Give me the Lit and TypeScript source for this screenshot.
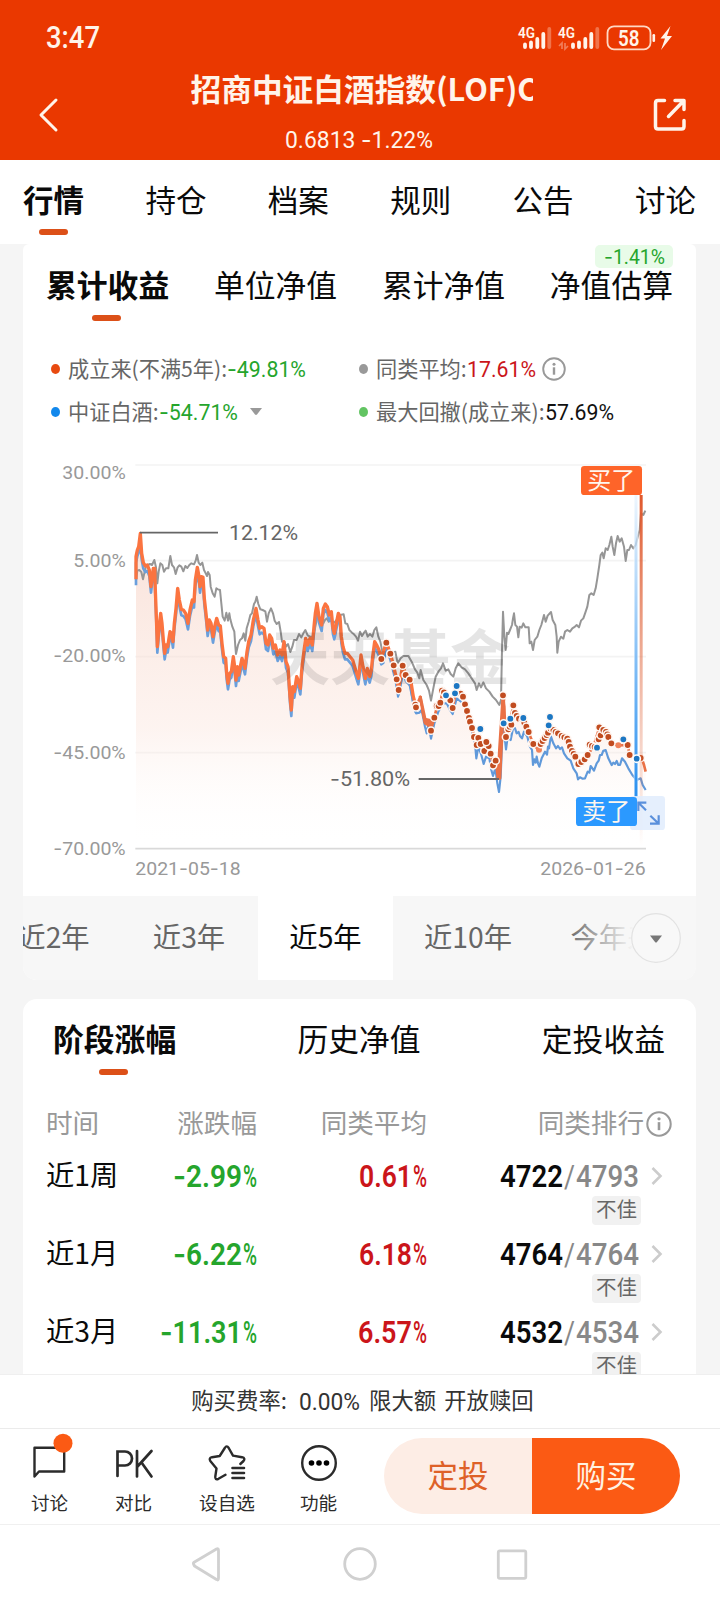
import { LitElement, html, svg, css } from "lit";
import { customElement } from "lit/decorators.js";

// Splits a figure so the sign is set in a face with a long hyphen.
const glyphs = (s: string) =>
  s.split(/(-)/).filter((p) => p).map((p) => (p === "-" ? svg`<tspan class="dash">-</tspan>` : svg`<tspan>${p}</tspan>`));

// A figure set to an exact width and cap height.
const num = (s: string, w: number, cap: number, cls = "") => html`<svg class="num ${cls}" width=${w} height=${cap} viewBox="0 0 ${w} ${cap}">
  <text x="0" y=${cap} font-size=${cap / 0.711} textLength=${w} lengthAdjust="spacingAndGlyphs">${glyphs(s)}</text>
</svg>`;

const numStyles = css`
  .num { display: block; overflow: visible; flex: none; fill: currentColor; font-family: Roboto, "Noto Sans", sans-serif; }
  .dash { font-family: Inter, sans-serif; }
  .bold { font-weight: 600; }
  .medium { font-weight: 500; }
`;

const infoIcon = (size: number) => html`<svg width=${size} height=${size} viewBox="0 0 24 24" fill="none" stroke="#999" stroke-width="1.9">
  <circle cx="12" cy="12" r="10.8" /><path d="M12 10.3v7.4" stroke-width="2.4" /><circle cx="12" cy="7.2" r="1.5" fill="#999" stroke="none" />
</svg>`;

// Series are kept in chart units: three units per pixel.
const AVERAGE = "48,390 52,362 58,360 64,366 69,388 73,370 78,348 84,345 90,342 96,345 103,330 108,352 112,400 116,365 121,340 127,345 132,365 138,355 145,355 151,318 156,345 162,352 167,372 173,352 178,346 184,350 190,364 196,348 202,354 208,345 214,340 222,343 227,332 231,315 236,338 241,345 247,338 252,360 256,368 261,378 264,366 269,375 272,410 278,430 284,440 289,415 294,418 300,420 304,460 308,500 314,512 319,488 324,512 328,490 331,508 337,530 343,545 346,590 348,612 354,585 360,570 366,565 371,550 376,572 380,535 386,515 391,495 396,490 402,462 406,455 410,440 415,462 421,478 428,480 436,484 441,515 446,490 453,475 459,490 464,512 470,522 477,516 482,545 486,575 493,575 498,590 504,582 511,606 517,590 522,570 530,570 537,552 544,562 550,550 556,540 563,556 570,560 580,560 592,500 602,510 610,520 615,510 620,505 626,515 632,508 640,520 650,510 660,495 671,493 676,520 682,522 688,540 696,548 702,553 708,560 714,572 720,545 726,558 732,548 737,542 743,560 750,552 757,560 763,540 769,532 775,560 781,575 788,610 795,600 802,588 812,610 826,605 833,640 842,625 850,618 865,618 875,635 885,658 892,668 898,685 902,660 910,690 920,705 927,722 933,752 940,715 947,680 955,665 963,655 969,640 977,662 985,658 992,672 1000,680 1007,655 1015,640 1025,652 1035,658 1045,670 1055,685 1065,700 1070,720 1077,700 1083,712 1090,697 1098,715 1108,725 1118,740 1128,750 1138,765 1143,750 1146,600 1149,485 1153,560 1157,600 1161,548 1165,552 1170,540 1176,525 1179,505 1182,490 1186,525 1191,530 1195,562 1199,530 1205,533 1210,520 1216,532 1226,532 1229,580 1234,575 1239,600 1244,570 1252,560 1258,540 1264,525 1272,495 1277,515 1283,497 1293,486 1298,510 1306,525 1310,560 1312,608 1316,575 1323,560 1330,566 1335,545 1342,540 1350,545 1357,535 1365,530 1370,525 1377,532 1383,512 1390,505 1396,488 1402,470 1408,435 1414,430 1421,435 1427,415 1432,385 1438,345 1442,315 1447,308 1451,325 1457,295 1463,300 1468,285 1474,260 1478,290 1483,315 1488,280 1493,258 1499,275 1505,265 1512,290 1517,333 1522,300 1527,300 1533,285 1540,295 1547,285 1553,262 1559,240 1563,190 1570,195 1576,182";
const FUND = "48,388 48,320 52,300 56,290 61,250 65,310 70,338 76,348 82,345 88,360 93,410 96,385 100,355 104,355 106,420 109,500 112,590 116,545 122,490 126,520 130,570 134,610 138,585 143,590 150,545 155,550 159,575 163,520 168,475 173,415 178,450 184,478 190,480 197,490 204,520 210,480 217,450 222,455 226,390 232,352 237,380 240,410 245,380 249,382 253,445 258,490 263,540 268,510 273,520 279,560 284,530 290,505 296,525 301,528 306,580 311,620 317,625 320,670 324,700 329,670 334,665 340,620 344,650 348,690 352,650 356,675 361,650 366,625 371,640 375,655 381,605 386,575 393,555 400,510 408,475 414,510 419,535 425,530 432,535 438,580 444,585 449,555 455,565 460,595 466,585 473,615 480,600 486,615 492,575 498,635 504,650 510,740 514,780 518,710 523,725 530,680 536,695 541,715 546,650 551,610 557,565 563,585 570,565 577,585 582,530 586,490 591,460 597,500 605,525 610,475 616,462 622,470 628,495 634,485 639,535 643,550 649,520 655,490 660,500 664,560 669,590 675,610 682,610 690,620 698,630 704,650 710,670 715,685 719,655 723,615 729,650 736,685 742,655 749,680 754,660 758,620 764,575 770,585 777,600 784,625 799,578 811,610 820,645 830,688 836,715 848,647 858,675 872,690 880,740 888,770";
const FUND_LATE = "888,770 901,740 908,785 916,820 924,815 933,840 943,803 952,765 961,758 968,722 980,738 992,750 998,773 1010,712 1020,728 1029,740 1041,783 1056,834 1068,880 1080,880 1090,905 1099,878 1112,910 1119,945 1127,932 1134,985 1140,985 1146,860 1149,738 1153,770 1156,858 1165,832 1180,768 1190,800 1210,812 1225,845 1240,882 1255,900 1270,868 1290,834 1310,847 1340,868 1356,903 1375,942 1403,915 1420,890 1438,834 1465,861 1474,880 1495,886 1522,885 1530,915 1550,925 1565,924 1572,945 1577,965";
const INDEX_LATE = "784,642 790,640 800,600 815,625 822,665 828,690 834,740 850,665 868,700 880,760 888,790 898,788 905,780 915,830 920,850 925,825 933,866 943,820 955,785 968,760 980,760 990,780 998,792 1010,745 1030,760 1045,800 1055,840 1062,870 1065,880 1069,925 1075,890 1084,915 1091,942 1098,920 1108,925 1114,960 1119,978 1126,955 1132,1000 1137,1026 1142,980 1146,880 1150,830 1155,870 1158,898 1163,860 1172,870 1180,830 1185,835 1190,850 1196,846 1200,858 1206,865 1212,845 1222,860 1230,890 1236,900 1239,945 1243,928 1247,938 1250,920 1254,940 1258,950 1265,925 1275,905 1281,914 1284,890 1287,895 1290,875 1293,860 1300,880 1308,895 1314,888 1320,897 1326,892 1332,910 1342,925 1352,932 1360,955 1370,970 1374,988 1380,982 1388,986 1395,985 1403,965 1408,968 1412,948 1422,962 1430,940 1436,932 1440,915 1445,915 1450,902 1457,900 1465,925 1475,945 1480,938 1485,942 1490,933 1495,945 1500,945 1506,925 1515,935 1525,955 1537,975 1550,990 1562,985 1568,1005 1577,1020";
const BUYS = "784,627 799,578 811,611 821,646 830,688 836,720 848,647 857,675 869,689 886,764 888,772 933,842 943,803 950,768 956,768 961,758 966,722 972,727 991,751 998,774 1015,729 1022,731 1029,740 1035,763 1041,783 1047,804 1050,815 1056,834 1062,861 1075,864 1070,885 1082,882 1093,903 1106,888 1099,876 1112,911 1119,946 1127,932 1149,736 1158,861 1165,838 1169,830 1174,824 1180,766 1185,789 1190,798 1197,806 1208,810 1213,818 1219,830 1226,846 1236,880 1240,882 1262,882 1268,873 1274,864 1280,855 1284,848 1292,836 1300,840 1307,846 1314,850 1325,858 1333,862 1342,866 1346,876 1350,890 1356,903 1361,912 1366,920 1375,942 1384,936 1394,928 1403,915 1409,884 1416,888 1424,891 1436,868 1438,832 1442,856 1450,840 1458,846 1462,853 1465,861 1474,880 1523,885 1562,924 1529,915".split(" ");
const SELLS = "978,736 1005,730 1010,708 1081,837 1151,820 1171,806 1210,804 1286,826 1290,801 1510,868 1431,893".split(" ");

const shift = (pts: string, dy: number) => pts.split(" ").map((p) => { const [x, y] = p.split(","); return `${x},${+y + dy}`; }).join(" ");
const dots = (list: string[], fill: string) => list.map((p) => {
  const [x, y] = p.split(",");
  return svg`<circle cx=${x} cy=${y} r="11" fill=${fill} stroke="#fff8f4" stroke-width="4.5" />`;
});
const label = (s: string, x: number, y: number, w: number, size: number, fill: string) =>
  svg`<text class="fig" x=${x} y=${y} font-size=${size} textLength=${w} lengthAdjust="spacingAndGlyphs" fill=${fill}>${glyphs(s)}</text>`;

@customElement("return-chart")
class ReturnChart extends LitElement {
  static styles = css`
    :host { display: block; }
    svg { display: block; }
    .fig { font-family: Roboto, sans-serif; }
    .dash { font-family: Inter, sans-serif; }
    .flag { font-family: "Noto Sans CJK SC", sans-serif; font-size: 72px; fill: #fff6ee; }
    .mark { font-family: "Noto Sans CJK SC", sans-serif; font-weight: 700; font-size: 180px; fill: #000; fill-opacity: 0.1; }
  `;
  render() {
    const ticks: [string, number, number, number][] = [["30.00%", 88, -173, 190], ["5.00%", 350, -140, 157], ["-20.00%", 637, -200, 217], ["-45.00%", 926, -200, 217], ["-70.00%", 1214, -200, 217]];
    return html`<svg width="673" height="440" viewBox="-291 0 2019 1320">
      <defs>
        <linearGradient id="area" x1="0" y1="390" x2="0" y2="1196" gradientUnits="userSpaceOnUse">
          <stop offset="0" stop-color="#f8d8cc" stop-opacity=".62" /><stop offset=".55" stop-color="#fbe6de" stop-opacity=".45" /><stop offset="1" stop-color="#fff" stop-opacity="0" />
        </linearGradient>
        <linearGradient id="sell" x1="0" y1="135" x2="0" y2="1040" gradientUnits="userSpaceOnUse">
          <stop offset="0" stop-color="#2a90ef" stop-opacity=".08" /><stop offset="1" stop-color="#2a90ef" />
        </linearGradient>
        <linearGradient id="buy" x1="0" y1="135" x2="0" y2="1190" gradientUnits="userSpaceOnUse">
          <stop offset="0" stop-color="#e0582c" /><stop offset=".4" stop-color="#e0683f" stop-opacity=".6" /><stop offset="1" stop-color="#e0683f" stop-opacity="0" />
        </linearGradient>
      </defs>
      ${[45, 332, 620, 908].map((y) => svg`<path d="M46 ${y}H1578" stroke="#f3f3f3" stroke-width="5" />`)}
      <path d="M46 1196H1578" stroke="#d9d9d9" stroke-width="5.5" />
      ${ticks.map(([s, y, x, w]) => label(s, x, y, w, 57, "#999"))}
      ${label("2021-05-18", 46, 1275, 316, 57, "#999")}
      ${label("2026-01-26", 1261, 1275, 316, 57, "#999")}
      <polygon points="48,1196 ${FUND} ${FUND_LATE} 1577,1196" fill="url(#area)" />
      <g fill="none" stroke-linejoin="round">
        <polyline points=${AVERAGE} stroke="#969696" stroke-width="6" />
        <polyline points=${shift(FUND, 18)} stroke="#6a9fdc" stroke-width="8" />
        <polyline points=${INDEX_LATE} stroke="#6099da" stroke-width="6.5" />
        <polyline points=${FUND} stroke="#fb7440" stroke-width="10" />
        <polyline points=${FUND_LATE} stroke="#ea7146" stroke-width="8" />
        <path d="M1136 985L1140 900L1150 745" stroke="#ea7146" stroke-width="12" />
      </g>
      <path d="M896 738h9l14 66 26 6-14 26-20-16z" fill="#ea7146" />
      <circle cx="1257" cy="899" r="9" fill="#f0825a" /><circle cx="1495" cy="886" r="9" fill="#f0825a" />
      <text class="mark" x="450" y="690" textLength="720">天天基金</text>
      ${dots(BUYS, "#c14c20")}
      ${dots(SELLS, "#1c77c3")}
      <path d="M60 248H294M896 987H1137" stroke="#666" stroke-width="5.5" />
      ${label("12.12%", 327, 269, 207, 60, "#666")}
      ${label("-51.80%", 630, 1008, 240, 60, "#666")}
      <path d="M1548 135V1040" stroke="#fff" stroke-width="14" stroke-opacity=".7" /><path d="M1548 135V1040" stroke="url(#sell)" stroke-width="9" />
      <path d="M1563.5 135V1190" stroke="url(#buy)" stroke-width="9" />
      <circle cx="1550" cy="926" r="11" fill="#1c77c3" stroke="#fff" stroke-width="5" />
      <rect x="1530" y="1038" width="105" height="102" rx="10" fill="#e1ecfd" fill-opacity=".85" />
      <path d="M1555 1083V1058H1579M1556 1059L1578 1081M1590 1121H1616V1096M1614 1119L1591 1097" fill="none" stroke="#5a90dc" stroke-width="6.5" />
      <rect x="1383" y="48" width="183" height="87" rx="10" fill="#fe6429" /><text class="flag" x="1402" y="118">买了</text>
      <rect x="1368" y="1041" width="183" height="87" rx="10" fill="#2b99ff" /><text class="flag" x="1387" y="1111">卖了</text>
    </svg>`;
  }
}

const ROWS = [
  { span: "近1周", pct: ["-2.99", 69], avg: ["0.61", 53], rank: "4722", of: "4793" },
  { span: "近1月", pct: ["-6.22", 69], avg: ["6.18", 53], rank: "4764", of: "4764" },
  { span: "近3月", pct: ["-11.31", 82], avg: ["6.57", 54], rank: "4532", of: "4534" },
] as const;

@customElement("app-root")
class AppRoot extends LitElement {
  static styles = [numStyles, css`
    :host { display: flex; flex-direction: column; width: 720px; height: 1602px; overflow: hidden; background: #f5f5f5; color: #0a0a0a;
      font-family: "Noto Sans CJK SC", sans-serif; line-height: 1; white-space: nowrap; }
    * { box-sizing: border-box; }
    svg { display: block; flex: none; overflow: visible; }
    .red { color: #cb151a; } .green { color: #25a52c; }
    header { background: #ea3800; color: #fff4ea; height: 160px; flex: none; }
    .status { display: flex; justify-content: space-between; padding: 26px 48px 0 46px; height: 70px; }
    .bar { display: flex; justify-content: space-between; align-items: center; padding: 0 33px 0 38px; height: 86px; margin-top: 2px; }
    .heading { display: flex; flex-direction: column; align-items: center; height: 86px; margin-left: 12px; }
    .heading .num { margin-left: -5px; }
    .title { width: 342px; overflow: hidden; font-size: 30.7px; font-weight: 600; line-height: 32px; padding-bottom: 5px; margin-bottom: 22px; }
    .nav { display: flex; justify-content: space-between; background: #fff; height: 84px; flex: none; padding: 24px 24px 0 23px; font-size: 30.5px; }
    .tab { display: flex; flex-direction: column; align-items: center; position: relative; line-height: 30px; }
    .on { font-weight: 700; }
    .tab i { width: 29px; height: 6px; border-radius: 3px; background: #dc5018; margin-top: 15px; }
    main { flex: 1; min-height: 0; overflow: hidden; padding: 0 24px 0 23px; display: flex; flex-direction: column; gap: 19px; }
    .card { background: #fff; border-radius: 14px; flex: none; overflow: hidden; }
    .first { border-radius: 6px 6px 14px 14px; height: 736px; }
    .sub { display: flex; justify-content: space-between; padding: 25px 23px 0; height: 115px; font-size: 30.8px; }
    .sub i { margin: 16px 2px 0 0; }
    .pill { position: absolute; right: 0; top: -24px; width: 78px; height: 23px; border-radius: 5px; background: #e8fbe8; display: flex; align-items: center; justify-content: center; }
    .legend { display: grid; grid-template-columns: 308px 1fr; grid-auto-rows: 43px; padding: 0 0 0 28px; height: 91px; font-size: 21.2px; color: #666; margin-top: -12px; }
    .item { display: flex; align-items: center; }
    .item b { width: 9px; height: 10px; border-radius: 50%; margin-right: 8px; background: #e84a10; }
    .item b.grey { background: #999; } .item b.blue { background: #1288ec; } .item b.lime { background: #62c462; }
    .item span { height: 24px; line-height: 22px; }
    .item .black { color: #111; }
    .gap-s { width: 6px; } .gap-m { width: 12px; }
    return-chart { margin-top: 12px; }
    .periods { display: flex; height: 84px; background: #f7f7f7; font-size: 28.3px; color: #666; line-height: 80px; margin-top: 6px; position: relative; }
    .periods div { flex: none; text-align: center; }
    .p1 { width: 99px; margin-left: -19px; } .p2 { width: 155px; padding-left: 17px; } .periods .p3 { width: 135px; background: #fff; color: #0a0a0a; } .p4 { width: 150px; } .p5 { width: 117px; padding-left: 23px; }
    .veil { position: absolute; right: 0; top: 0; width: 130px; height: 84px; display: flex; align-items: center; padding-left: 65px; background: linear-gradient(90deg, #f7f7f700, #f7f7f7 52%); }
    .stage { display: flex; justify-content: space-between; padding: 24px 31px 0 30px; height: 108px; font-size: 30.8px; }
    .stage i { margin: 16px 2px 0 0; }
    .row { display: grid; grid-template-columns: 80px 131px 170px 1fr; padding: 0 24px 0 23px; height: 78px; }
    .head { height: 50px; color: #999; font-size: 26.6px; line-height: 30px; }
    .head div { display: flex; justify-content: flex-end; gap: 2px; }
    .head div:first-child { justify-content: flex-start; }
    .head svg { margin-top: 4px; }
    .when { font-size: 28.3px; line-height: 34px; }
    .cell { display: flex; justify-content: flex-end; gap: 1px; padding-top: 8px; }
    .rank { display: flex; flex-direction: column; gap: 9px; padding: 8px 0 0 73px; }
    .figs { display: flex; gap: 1px; color: #888; } .figs .bold { color: #0a0a0a; }
    .figs .chev { margin: 2px 0 0 11px; }
    .tag { width: 49px; height: 29px; border-radius: 4px; background: #f1f1f1; color: #666; font-size: 20.5px; line-height: 25px; text-align: center; margin-left: 92px; }
    .fee { height: 54px; flex: none; background: #fff; border-top: 1px solid #efefef; display: flex; justify-content: center; align-items: center; padding-left: 5px; font-size: 22.4px; color: #333; }
    .fee span { line-height: 23px; height: 28px; }
    .fee .num { margin: 0 9px 0 12px; } .fee span + span { margin-left: 8px; }
    .actions { height: 97px; flex: none; background: #fff; border-top: 1.5px solid #ebebeb; border-bottom: 1.5px solid #f0f0f0; display: flex; padding-left: 21px; color: #2b2b2b; }
    .act { display: flex; flex-direction: column; align-items: center; font-size: 18.6px; padding-top: 16px; gap: 12px; }
    .a1 { width: 57px; } .a2 { width: 111px; } .a3 { width: 76px; } .a4 { width: 107px; }
    .cta { display: flex; height: 76px; margin: 9px 0 0 12px; border-radius: 38px; overflow: hidden; font-size: 30.5px; line-height: 72px; text-align: center; }
    .cta div { width: 148px; background: #fdede5; color: #de6128; } .cta .buy { background: #fb5a14; color: #fff2e2; }
    .system { height: 77px; flex: none; background: #fff; display: flex; justify-content: center; padding-top: 22px; }
  `];
  render() {
    return html`
      <header>
        <div class="status">
          ${num("3:47", 54, 22, "medium")}
          <svg width="154" height="26" viewBox="519 25 154 26">
            <g class="num bold" font-size="15.5"><text x="519" y="37" textLength="17" lengthAdjust="spacingAndGlyphs">4G</text><text x="559" y="37" textLength="17" lengthAdjust="spacingAndGlyphs">4G</text></g>
            <g stroke="#fff4ea" stroke-width="3.8" stroke-linecap="round">
              <path d="M526 43.5V46M532 41.5V46M538.3 38V46M544.3 33V46M574 43.5V46M580 41.5V46M586.3 38V46M592.3 33V46" />
              <path d="M550.3 28V46M598.3 28V46" stroke-opacity=".32" />
            </g>
            <path d="M563 48V42l-3 3M566 42v6l3-3" fill="none" stroke="#fff" stroke-opacity=".35" stroke-width="1.7" />
            <rect x="608.5" y="25.3" width="43" height="23" rx="6.5" fill="none" stroke="#ffd9c4" stroke-width="1.8" />
            <rect x="653.5" y="33" width="2.6" height="8" rx="1.2" fill="#fff4ea" />
            <text class="num bold" x="619" y="44.5" font-size="21.5" textLength="21.5" lengthAdjust="spacingAndGlyphs">58</text>
            <path d="M671.5 25L661.5 37.5h4.500l-4 11.5 11-14h-5z" fill="#fff4ea" />
          </svg>
        </div>
        <div class="bar">
          <svg width="20" height="34" viewBox="0 0 20 34"><path d="M18 2L3 17L18 32" fill="none" stroke="#fff4ea" stroke-width="3" stroke-linecap="round" stroke-linejoin="round" /></svg>
          <div class="heading"><div class="title">招商中证白酒指数(LOF)C</div>${num("0.6813 -1.22%", 148, 17)}</div>
          <svg width="34" height="34" viewBox="0 0 34 34"><path d="M11.500 2.500H5Q2.500 2.500 2.500 5V28.500Q2.500 31 5 31H28.500Q31 31 31 28.500V22.500M22 2.500H31V11.500M30.500 3L15.500 18.500" fill="none" stroke="#fff4ea" stroke-width="3.500" stroke-linecap="round" stroke-linejoin="round" /></svg>
        </div>
      </header>
      <nav class="nav">
        <div class="tab on">行情<i></i></div>
        ${["持仓", "档案", "规则", "公告", "讨论"].map((t) => html`<div class="tab">${t}</div>`)}
      </nav>
      <main>
        <section class="card first">
          <div class="sub">
            <div class="tab on">累计收益<i></i></div><div class="tab">单位净值</div><div class="tab">累计净值</div>
            <div class="tab">净值估算<span class="pill green">${num("-1.41%", 61, 14)}</span></div>
          </div>
          <div class="legend">
            <div class="item"><b></b><span>成立来(不满5年):</span>${num("-49.81%", 79, 16, "green")}</div>
            <div class="item"><b class="grey"></b><span>同类平均:</span>${num("17.61%", 69, 16, "red")}<div class="gap-s"></div>${infoIcon(24)}</div>
            <div class="item"><b class="blue"></b><span>中证白酒:</span>${num("-54.71%", 79, 16, "green")}<div class="gap-m"></div><svg width="12" height="7" viewBox="0 0 12 7"><path d="M0 0H12L7 6.500Q6 7.300 5 6.500z" fill="#999" /></svg></div>
            <div class="item"><b class="lime"></b><span>最大回撤(成立来):</span>${num("57.69%", 69, 16, "black")}</div>
          </div>
          <return-chart></return-chart>
          <div class="periods">
            <div class="p1">近2年</div><div class="p2">近3年</div><div class="p3">近5年</div><div class="p4">近10年</div><div class="p5">今年来</div>
            <div class="veil"><svg width="50" height="50" viewBox="0 0 50 50"><circle cx="25" cy="25" r="24.300" fill="#f8f8f8" stroke="#e2e2e2" stroke-width="1.200" /><path d="M19 22.500H31L26 29Q25 30 24 29z" fill="#777" /></svg></div>
          </div>
        </section>
        <section class="card">
          <div class="stage"><div class="tab on">阶段涨幅<i></i></div><div class="tab">历史净值</div><div class="tab">定投收益</div></div>
          <div class="row head"><div>时间</div><div>涨跌幅</div><div>同类平均</div><div>同类排行${infoIcon(26)}</div></div>
          ${ROWS.map((r) => html`<div class="row">
            <div class="when">${r.span}</div>
            <div class="cell green">${num(r.pct[0], r.pct[1], 22, "bold")}${num("%", 14, 22, "medium")}</div>
            <div class="cell red">${num(r.avg[0], r.avg[1], 22, "bold")}${num("%", 14, 22, "medium")}</div>
            <div class="rank">
              <div class="figs">${num(r.rank, 63, 22, "bold")}${num("/", 11, 22)}${num(r.of, 63, 22, "medium")}<svg class="chev" width="11" height="18" viewBox="0 0 11 18"><path d="M1.500 1L9.500 9L1.500 17" fill="none" stroke="#ccc" stroke-width="2.600" /></svg></div>
              <div class="tag">不佳</div>
            </div>
          </div>`)}
        </section>
      </main>
      <div class="fee"><span>购买费率:</span>${num("0.00%", 61, 17)}<span>限大额</span><span>开放赎回</span></div>
      <div class="actions">
        <div class="act a1"><svg width="34" height="36" viewBox="34 1445 34 36"><path d="M35.500 1447.800H65.200V1471.500H40L35.500 1476.500z" fill="none" stroke="#2b2b2b" stroke-width="2.400" stroke-linejoin="round" /><circle cx="64" cy="1443.300" r="9.500" fill="#fb5a14" /></svg>讨论</div>
        <div class="act a2"><svg width="36" height="36" viewBox="115.500 1445 36 36"><path d="M117 1476V1451.500H124.500A6.800 6.800 0 0 1 124.500 1465.500H117M136.500 1451V1476.500M151 1451L137 1466.500M141 1462.500L151 1476.500" fill="none" stroke="#2b2b2b" stroke-width="2.700" stroke-linecap="round" /></svg>对比</div>
        <div class="act a3"><svg width="38" height="36" viewBox="208 1445 38 36"><path d="M225.500 1474.800L218.500 1478.800Q214.800 1480.300 215.300 1476.500L216.500 1468.500L210.300 1461Q208.600 1458 212 1457.200L219.700 1456L224.800 1448Q226.700 1444.800 228.700 1448L233 1455.600L242 1457.200Q245.800 1458.200 243.500 1461L240.300 1464" fill="none" stroke="#2b2b2b" stroke-width="2.400" stroke-linecap="round" stroke-linejoin="round" /><path d="M232.500 1468H244M232.500 1473H244M232.500 1478H244" stroke="#2b2b2b" stroke-width="2.600" stroke-linecap="round" /></svg>设自选</div>
        <div class="act a4"><svg width="36" height="36" viewBox="0 0 36 36"><circle cx="18" cy="18" r="16.800" fill="none" stroke="#2b2b2b" stroke-width="2.400" /><circle cx="10.500" cy="18" r="2.800" /><circle cx="18" cy="18" r="2.800" /><circle cx="25.500" cy="18" r="2.800" /></svg>功能</div>
        <div class="cta"><div>定投</div><div class="buy">购买</div></div>
      </div>
      <div class="system">
        <svg width="336" height="34" viewBox="192 1546 336 34" fill="none" stroke="#d0d0d0" stroke-width="2.800" stroke-linejoin="round"><path d="M193.500 1563Q193 1562 194.500 1561L216.500 1548Q218.500 1547 218.500 1549.500V1577Q218.500 1580 216.500 1578.500L194.500 1565z" /><circle cx="360" cy="1563" r="15.300" /><rect x="498.300" y="1549.800" width="27.500" height="27.500" rx="1.500" /></svg>
      </div>`;
  }
}
